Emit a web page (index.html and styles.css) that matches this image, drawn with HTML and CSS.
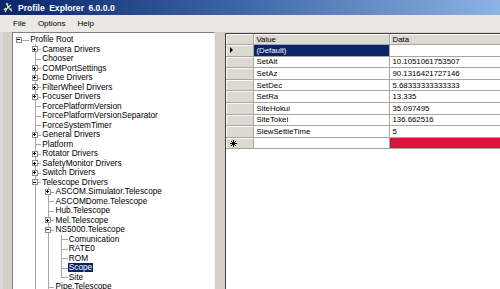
FILE: index.html
```html
<!DOCTYPE html>
<html lang="en">
<head>
  <meta charset="UTF-8" />
  <title>Profile Explorer 6.0.0.0</title>
  <link rel="stylesheet" href="styles.css">
</head>
<body>
  <div class="titlebar">
    <svg class="app-icon" width="11" height="11" viewBox="0 0 11 11">
      <path d="M2 10 L5 5 L4 2 M5 5 L9 9 M5 5 L8 3 M3 6 L1 8" stroke="#e8f0d8" stroke-width="1.2" fill="none"/>
      <circle cx="4" cy="2" r="1.3" fill="#8fd06a"/>
      <path d="M6 7 L9 6" stroke="#6fb04a" stroke-width="1"/>
    </svg>
    <span class="title">Profile Explorer 6.0.0.0</span>
  </div>
  <div class="menubar">
    <span class="menu-item">File</span>
    <span class="menu-item">Options</span>
    <span class="menu-item">Help</span>
  </div>
  <div class="main">
    <div class="gutter"></div>
    <div class="tree">
      <div class="node"><span class="cell root"><i class="box minus"></i></span><span class="label">Profile Root</span></div>
      <div class="node"><span class="cell"></span><span class="cell tee"><i class="box plus"></i></span><span class="label">Camera Drivers</span></div>
      <div class="node"><span class="cell"></span><span class="cell tee"></span><span class="label">Chooser</span></div>
      <div class="node"><span class="cell"></span><span class="cell tee"><i class="box plus"></i></span><span class="label">COMPortSettings</span></div>
      <div class="node"><span class="cell"></span><span class="cell tee"><i class="box plus"></i></span><span class="label">Dome Drivers</span></div>
      <div class="node"><span class="cell"></span><span class="cell tee"><i class="box plus"></i></span><span class="label">FilterWheel Drivers</span></div>
      <div class="node"><span class="cell"></span><span class="cell tee"><i class="box plus"></i></span><span class="label">Focuser Drivers</span></div>
      <div class="node"><span class="cell"></span><span class="cell tee"></span><span class="label">ForcePlatformVersion</span></div>
      <div class="node"><span class="cell"></span><span class="cell tee"></span><span class="label">ForcePlatformVersionSeparator</span></div>
      <div class="node"><span class="cell"></span><span class="cell tee"></span><span class="label">ForceSystemTimer</span></div>
      <div class="node"><span class="cell"></span><span class="cell tee"><i class="box plus"></i></span><span class="label">General Drivers</span></div>
      <div class="node"><span class="cell"></span><span class="cell tee"></span><span class="label">Platform</span></div>
      <div class="node"><span class="cell"></span><span class="cell tee"><i class="box plus"></i></span><span class="label">Rotator Drivers</span></div>
      <div class="node"><span class="cell"></span><span class="cell tee"><i class="box plus"></i></span><span class="label">SafetyMonitor Drivers</span></div>
      <div class="node"><span class="cell"></span><span class="cell tee"><i class="box plus"></i></span><span class="label">Switch Drivers</span></div>
      <div class="node"><span class="cell"></span><span class="cell tee"><i class="box minus"></i></span><span class="label">Telescope Drivers</span></div>
      <div class="node"><span class="cell"></span><span class="cell pipe"></span><span class="cell tee"><i class="box plus"></i></span><span class="label">ASCOM.Simulator.Telescope</span></div>
      <div class="node"><span class="cell"></span><span class="cell pipe"></span><span class="cell tee"></span><span class="label">ASCOMDome.Telescope</span></div>
      <div class="node"><span class="cell"></span><span class="cell pipe"></span><span class="cell tee"></span><span class="label">Hub.Telescope</span></div>
      <div class="node"><span class="cell"></span><span class="cell pipe"></span><span class="cell tee"><i class="box plus"></i></span><span class="label">Mel.Telescope</span></div>
      <div class="node"><span class="cell"></span><span class="cell pipe"></span><span class="cell tee"><i class="box minus"></i></span><span class="label">NS5000.Telescope</span></div>
      <div class="node"><span class="cell"></span><span class="cell pipe"></span><span class="cell pipe"></span><span class="cell tee"></span><span class="label">Comunication</span></div>
      <div class="node"><span class="cell"></span><span class="cell pipe"></span><span class="cell pipe"></span><span class="cell tee"></span><span class="label">RATE0</span></div>
      <div class="node"><span class="cell"></span><span class="cell pipe"></span><span class="cell pipe"></span><span class="cell tee"></span><span class="label">ROM</span></div>
      <div class="node"><span class="cell"></span><span class="cell pipe"></span><span class="cell pipe"></span><span class="cell tee"></span><span class="label selected">Scope</span></div>
      <div class="node"><span class="cell"></span><span class="cell pipe"></span><span class="cell pipe"></span><span class="cell end"></span><span class="label">Site</span></div>
      <div class="node"><span class="cell"></span><span class="cell pipe"></span><span class="cell tee"></span><span class="label">Pipe.Telescope</span></div>
    </div>
    <div class="splitter"></div>
    <div class="grid">
      <div class="row head">
        <span class="rowhead"></span><span class="colhead">Value</span><span class="colhead">Data</span>
      </div>
      <div class="row">
        <span class="rowhead"><i class="arrow"></i></span><span class="cell-v active">(Default)</span><span class="cell-d"></span>
      </div>
      <div class="row"><span class="rowhead"></span><span class="cell-v">SetAlt</span><span class="cell-d">10.1051061753507</span></div>
      <div class="row"><span class="rowhead"></span><span class="cell-v">SetAz</span><span class="cell-d">90.1316421727146</span></div>
      <div class="row"><span class="rowhead"></span><span class="cell-v">SetDec</span><span class="cell-d">5.68333333333333</span></div>
      <div class="row"><span class="rowhead"></span><span class="cell-v">SetRa</span><span class="cell-d">13.335</span></div>
      <div class="row"><span class="rowhead"></span><span class="cell-v">SiteHokui</span><span class="cell-d">35.097495</span></div>
      <div class="row"><span class="rowhead"></span><span class="cell-v">SiteTokei</span><span class="cell-d">136.662516</span></div>
      <div class="row"><span class="rowhead"></span><span class="cell-v">SlewSettleTime</span><span class="cell-d">5</span></div>
      <div class="row">
        <span class="rowhead">
          <svg class="star" width="7" height="7" viewBox="0 0 7 7">
            <path d="M3.5 0 V7 M0 3.5 H7 M1 1 L6 6 M6 1 L1 6" stroke="#000" stroke-width="1"/>
          </svg>
        </span><span class="cell-v"></span><span class="cell-d new"></span>
      </div>
    </div>
  </div>
</body>
</html>
```

FILE: styles.css
```css
body {
  margin: 0;
  width: 500px;
  height: 289px;
  overflow: hidden;
  background: #d4d0c8;
  font-family: 'Liberation Sans', Arial, sans-serif;
  color: #000;
}
.titlebar {
  height: 15px;
  display: flex;
  align-items: center;
  gap: 4px;
  padding-left: 3px;
  background: linear-gradient(to right, #0a246a 0%, #3a62a4 45%, #8cb3e2 100%);
  color: #fff;
  font-weight: bold;
  font-size: 8.6px;
  word-spacing: 2px;
}
.app-icon {
  flex: none;
}
.menubar {
  height: 17px;
  display: flex;
  align-items: center;
  padding-left: 13px;
  background: #ebe9e3;
  font-size: 8px;
}
.menu-item {
  margin-right: 12px;
}
.main {
  display: flex;
  height: 257px;
}
.gutter {
  width: 12px;
  flex: none;
  box-sizing: border-box;
  border-left: 3px solid #dedbd4;
}
.tree {
  width: 203px;
  flex: none;
  box-sizing: border-box;
  background: #fff;
  border-top: 1px solid #808080;
  border-left: 1px solid #808080;
  border-right: 1px solid #f4f3f0;
  padding-top: 1.75px;
  padding-left: 1.625px;
  font-size: 8.25px;
  overflow: hidden;
}
.node {
  display: flex;
  align-items: center;
  height: 9.52px;
  white-space: nowrap;
}
.cell {
  flex: none;
  width: 13.25px;
  height: 100%;
  position: relative;
  display: flex;
  align-items: center;
  justify-content: center;
}
.cell.root {
  width: 14.4px;
  justify-content: flex-start;
  padding-left: 1.2px;
  box-sizing: border-box;
}
.pipe::before,
.tee::before,
.end::before {
  content: "";
  position: absolute;
  left: 50%;
  top: 0;
  width: 1px;
  height: 100%;
  background: #a8a8a8;
}
.end::before {
  height: 50%;
}
.tee::after,
.end::after,
.root::after {
  content: "";
  position: absolute;
  left: 50%;
  right: 0;
  top: 50%;
  height: 1px;
  background: #a8a8a8;
}
.root::after {
  left: 5px;
}
.box {
  position: relative;
  z-index: 1;
  width: 6px;
  height: 6px;
  box-sizing: border-box;
  border: 1px solid #8c8c8c;
  background: #fff;
}
.box::before {
  content: "";
  position: absolute;
  left: 0.5px;
  top: 1.5px;
  width: 3px;
  height: 1px;
  background: #000;
}
.box.plus::after {
  content: "";
  position: absolute;
  left: 1.5px;
  top: 0.5px;
  width: 1px;
  height: 3px;
  background: #000;
}
.label {
  padding: 0 1.2px;
  line-height: 9px;
}
.label.selected {
  background: #0a246a;
  color: #fff;
}
.splitter {
  width: 10px;
  flex: none;
}
.grid {
  flex: 1;
  margin-top: 1px;
  background: #fff;
  border-top: 1px solid #404040;
  border-left: 1px solid #404040;
  font-size: 7.8px;
  overflow: hidden;
}
.row {
  display: grid;
  grid-template-columns: 28px 136px 200px;
  height: 11.6px;
}
.row.head {
  height: 11px;
}
.row > span {
  box-sizing: border-box;
  border-right: 1px solid #a7a6a0;
  border-bottom: 1px solid #a7a6a0;
  display: flex;
  align-items: center;
  padding-left: 2.5px;
  white-space: nowrap;
}
.rowhead,
.colhead {
  background: #dcd9d1;
  box-shadow: inset 1px 1px #fbfaf8;
}
.row > .rowhead {
  padding-left: 4px;
}
.arrow {
  width: 0;
  height: 0;
  border-top: 3px solid transparent;
  border-bottom: 3px solid transparent;
  border-left: 3px solid #000;
}
.active {
  background: #0a246a;
  color: #fff;
}
.new {
  background: #dc143c;
}
```
